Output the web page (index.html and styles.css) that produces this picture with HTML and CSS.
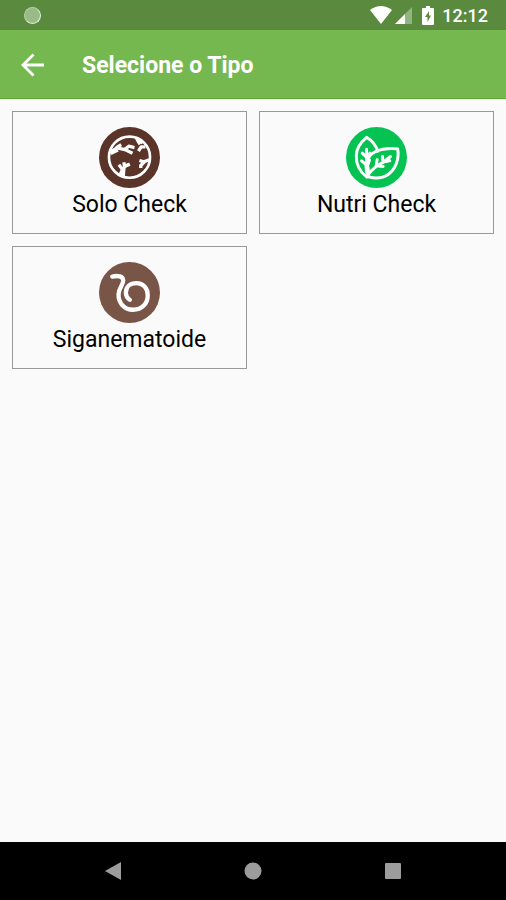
FILE: index.html
```html
<!DOCTYPE html>
<html lang="pt-BR">
<head>
  <meta charset="UTF-8">
  <meta name="viewport" content="width=device-width, initial-scale=1.0">
  <title>Selecione o Tipo</title>
  <link rel="stylesheet" href="styles.css">
</head>
<body>

  <!-- Status bar -->
  <div class="status-bar">
    <span class="status-dot"></span>
    <div class="status-icons">
      <svg class="wifi" width="22" height="18" viewBox="0 0 22 18"><path d="M0 4Q11-4 22 4L11 18Z" fill="#fff"/></svg>
      <svg class="signal" width="17" height="17" viewBox="0 0 17 17">
        <path d="M17 0V17H0Z" fill="#fff" opacity=".35"/>
        <path d="M10 7V17H0Z" fill="#fff"/>
      </svg>
      <svg class="battery" width="12" height="19" viewBox="0 0 12 19">
        <path d="M4 0h4v2h3q1 0 1 1v15q0 1-1 1H1q-1 0-1-1V3q0-1 1-1h3z" fill="#fff"/>
        <path d="M7 5L3 11h2.500v5L9 9.500H7z" fill="#5a8a3d"/>
      </svg>
      <span class="clock">12:12</span>
    </div>
  </div>

  <!-- App bar -->
  <header class="app-bar">
    <button type="button" class="back-btn" aria-label="Voltar">
      <svg width="24" height="24" viewBox="0 0 24 24"><path d="M23 12H2M12.500 1.500L2 12l10.500 10.500" fill="none" stroke="#fff" stroke-width="2.800"/></svg>
    </button>
    <h1>Selecione o Tipo</h1>
  </header>

  <!-- Type selection -->
  <main class="types">
    <button type="button" class="type-card">
      <svg width="61" height="61" viewBox="28 20 184 184">
        <circle cx="120" cy="112" r="92" fill="#5a3329"/>
        <circle cx="120" cy="111" r="62" fill="none" stroke="#fff" stroke-width="8"/>
        <g fill="none" stroke="#fff" stroke-width="10" stroke-linejoin="round">
          <path d="M64 96L82 83L106 88L129 99M80 82L95 73M106 87L118 78L135 82"/>
          <path d="M62 98L84 87" stroke-width="15"/>
          <path d="M141 53L146 63L152 72M149 62L160 68M168 80L155 80L147 93"/>
          <path d="M179 119L164 125L150 121M165 125L154 136L154 144"/>
          <path d="M100 166L100 148L107 138L121 132M99 148L88 134M105 139L103 126"/>
        </g>
        <path d="M88 160L96 143L108 146L106 171Z" fill="#fff"/>
      </svg>
      <span>Solo Check</span>
    </button>

    <button type="button" class="type-card">
      <svg width="61" height="61" viewBox="30 20 184 184">
        <circle cx="122" cy="112" r="92" fill="#05c353"/>
        <g fill="none" stroke="#fff" stroke-width="9" stroke-linejoin="round" stroke-linecap="round">
          <path d="M126 93C120 75 107 60 92 51C73 67 61 84 61 107C60 137 76 158 93 171"/>
          <path d="M97 169C83 135 93 106 119 94C138 86 163 84 186 86C191 116 180 147 156 164C140 175 118 175 100 171"/>
          <path d="M96 164C111 146 125 135 142 127M124 119L121 137L142 139M140 109L142 126L162 122M142 127L164 109"/>
          <path d="M97 161L97 146L92 126L92 87M79 99L91 110L102 99M77 122L95 137L101 119"/>
        </g>
      </svg>
      <span>Nutri Check</span>
    </button>

    <button type="button" class="type-card">
      <svg width="61" height="61" viewBox="28 20 184 184">
        <circle cx="120" cy="112" r="92" fill="#795548"/>
        <path d="M68 64C85 60 100 63 101 75C102 88 88 97 87 117C86 143 104 164 131 164C158 164 175 145 175 120C175 98 161 84 141 84C121 84 109 96 109 113C109 123 113 129 121 134" fill="none" stroke="#fff" stroke-width="13" stroke-linecap="round"/>
      </svg>
      <span>Siganematoide</span>
    </button>
  </main>

  <!-- System navigation -->
  <nav class="nav-bar">
    <button type="button" aria-label="Voltar">
      <svg width="18" height="18" viewBox="0 0 18 18"><path d="M1 9L17 0V18Z"/></svg>
    </button>
    <button type="button" aria-label="Início">
      <svg width="18" height="18" viewBox="0 0 18 18"><circle cx="9" cy="9" r="8.500"/></svg>
    </button>
    <button type="button" aria-label="Recentes">
      <svg width="18" height="18" viewBox="0 0 18 18"><rect x="1" y="1" width="16" height="16" rx="1"/></svg>
    </button>
  </nav>

</body>
</html>
```

FILE: styles.css
```css
* {
  box-sizing: border-box;
}

body {
  font-family: Roboto, sans-serif;
  margin: 0;
  min-height: 100vh;
  display: flex;
  flex-direction: column;
  background-color: #fafafa;
}

button {
  font: inherit;
  padding: 0;
  border: none;
  background: none;
  cursor: pointer;
}

svg {
  display: block;
}

.status-bar {
  display: flex;
  justify-content: space-between;
  align-items: center;
  height: 30px;
  padding: 0 18px 0 24px;
  background-color: #5a8a3d;
}

.status-dot {
  width: 17px;
  height: 17px;
  border: 1px solid #b4cea6;
  border-right-color: #e4f0dd;
  border-bottom-color: #e4f0dd;
  border-radius: 50%;
  background-color: #9abb87;
}

.status-icons {
  display: flex;
  align-items: center;
}

.signal {
  margin-left: 3px;
}

.battery {
  margin-left: 10px;
}

.clock {
  margin-left: 8px;
  color: #fff;
  font-size: 18px;
  font-weight: 500;
}

.app-bar {
  display: flex;
  align-items: center;
  height: 69px;
  padding: 2px 21px 0;
  background-color: #75b84f;
  border-bottom: 1px solid #5fab2c;
}

.app-bar h1 {
  margin: 0 0 0 37px;
  color: #fff;
  font-size: 23px;
  font-weight: 700;
}

.types {
  flex: 1;
  display: grid;
  grid-template-columns: 1fr 1fr;
  align-content: start;
  gap: 12px;
  padding: 12px;
}

.type-card {
  display: flex;
  flex-direction: column;
  align-items: center;
  gap: 2px;
  padding: 15px 8px 13px;
  border: 1px solid #999;
  color: #000;
  font-size: 23px;
  line-height: 30px;
}

.nav-bar {
  display: flex;
  justify-content: center;
  height: 58px;
  background-color: #000;
}

.nav-bar button {
  display: flex;
  justify-content: center;
  align-items: center;
  width: 140px;
}

.nav-bar svg {
  fill: #9c9c9c;
}
```
